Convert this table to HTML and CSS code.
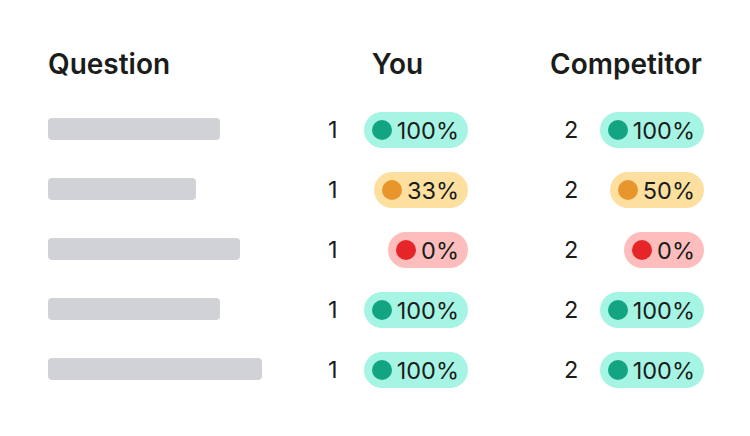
FILE: index.html
```html
<!DOCTYPE html>
<html>
<head>
<meta charset="utf-8">
<link rel="stylesheet" href="styles.css">
</head>
<body>
<div class="table">
  <div class="head">Question</div>
  <div class="head center">You</div>
  <div class="head center">Competitor</div>

  <div class="cell"><div class="bar" style="width:172px"></div></div>
  <div class="cell score you"><span class="num">1</span><span class="pill good"><i class="dot"></i>100%</span></div>
  <div class="cell score comp"><span class="num">2</span><span class="pill good"><i class="dot"></i>100%</span></div>

  <div class="cell"><div class="bar" style="width:148px"></div></div>
  <div class="cell score you"><span class="num">1</span><span class="pill mid"><i class="dot"></i>33%</span></div>
  <div class="cell score comp"><span class="num">2</span><span class="pill mid"><i class="dot"></i>50%</span></div>

  <div class="cell"><div class="bar" style="width:192px"></div></div>
  <div class="cell score you"><span class="num">1</span><span class="pill bad"><i class="dot"></i>0%</span></div>
  <div class="cell score comp"><span class="num">2</span><span class="pill bad"><i class="dot"></i>0%</span></div>

  <div class="cell"><div class="bar" style="width:172px"></div></div>
  <div class="cell score you"><span class="num">1</span><span class="pill good"><i class="dot"></i>100%</span></div>
  <div class="cell score comp"><span class="num">2</span><span class="pill good"><i class="dot"></i>100%</span></div>

  <div class="cell"><div class="bar" style="width:214px"></div></div>
  <div class="cell score you"><span class="num">1</span><span class="pill good"><i class="dot"></i>100%</span></div>
  <div class="cell score comp"><span class="num">2</span><span class="pill good"><i class="dot"></i>100%</span></div>
</div>
</body>
</html>
```
FILE: styles.css
```css
html, body {
  margin: 0;
  padding: 0;
  background: #ffffff;
}
body {
  font-family: Inter, "Noto Sans", sans-serif;
  color: #1b1d1b;
}
.table {
  display: grid;
  grid-template-columns: minmax(0, 1fr) 141px 156px;
  column-gap: 80px;
  padding: 48px 46px 0 48px;
}
.head {
  font-size: 28px;
  font-weight: 600;
  line-height: 32px;
  height: 52px;
}
.head.center {
  text-align: center;
}
.cell {
  height: 60px;
  display: flex;
  align-items: center;
}
.bar {
  height: 22px;
  border-radius: 4px;
  background: #d1d2d6;
  margin-top: -2px;
  flex: none;
}
.score .num {
  font-size: 23.5px;
  line-height: 1;
}
.you .num {
  padding-left: 1px;
}
.comp .num {
  padding-left: 16px;
}
.pill {
  margin-left: auto;
  display: inline-flex;
  align-items: center;
  height: 36px;
  padding: 0 9px 0 8px;
  border-radius: 18px;
  font-size: 23.5px;
  gap: 5px;
}
.dot {
  width: 20px;
  height: 20px;
  border-radius: 50%;
  display: block;
}
.good { background: #a6f5e4; }
.good .dot { background: #13a582; }
.mid { background: #fde0a0; }
.mid .dot { background: #e8952c; }
.bad { background: #fdbdbd; }
.bad .dot { background: #e52527; }
```
